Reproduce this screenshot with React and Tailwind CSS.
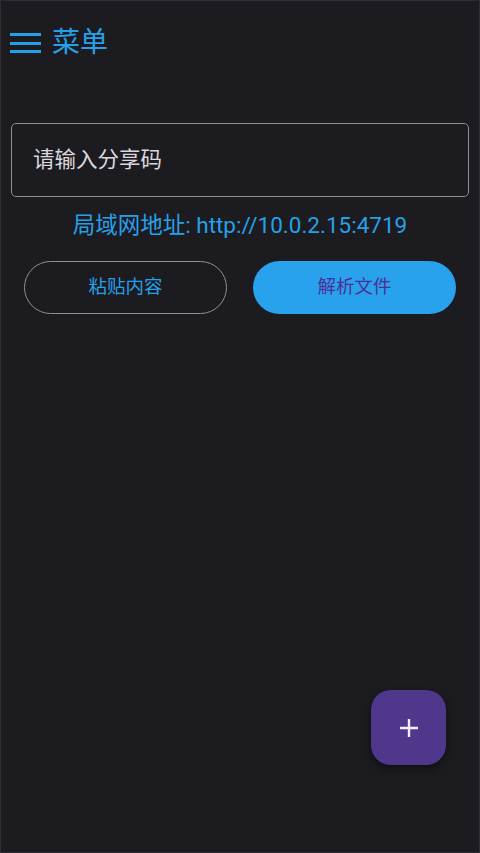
import React from "react";

export default function App() {
  return (
    <div
      className="relative w-[480px] h-[853px] overflow-hidden bg-[#1c1b20] border border-[#2e2d33] flex flex-col"
      style={{ fontFamily: 'Roboto, "Noto Sans CJK SC", sans-serif' }}
    >
      {/* Header */}
      <div className="flex items-center h-[40px] mt-[22px] pl-[9px]">
        <div className="flex flex-col gap-[5.5px] w-[31px]">
          <div className="h-[3px] bg-[#27a0ea]"></div>
          <div className="h-[3px] bg-[#27a0ea]"></div>
          <div className="h-[3px] bg-[#27a0ea]"></div>
        </div>
        <span className="ml-[11px] text-[28px] leading-none text-[#27a0ea]">菜单</span>
      </div>

      {/* Input */}
      <div className="mt-[60px] mx-[10px] h-[74px] rounded-[5px] border border-[#8f8f94] flex items-center pl-[21px]">
        <span className="text-[21.5px] text-[#d9d8de]">请输入分享码</span>
      </div>

      {/* LAN address */}
      <div className="mt-[15px] text-center text-[22.5px] leading-[27px] text-[#27a0ea]">
        局域网地址: http://10.0.2.15:4719
      </div>

      {/* Buttons */}
      <div className="mt-[22px] flex gap-[26px] px-[23px]">
        <button className="w-[203px] h-[53px] rounded-full border border-[#8f8f94] text-[18.5px] text-[#27a0ea] flex items-center justify-center">
          粘贴内容
        </button>
        <button className="w-[203px] h-[53px] rounded-full bg-[#28a2ec] text-[18.5px] text-[#4b2f96] flex items-center justify-center">
          解析文件
        </button>
      </div>

      {/* FAB */}
      <div className="absolute left-[370px] top-[689px] w-[75px] h-[75px] rounded-[20px] bg-[#4f378b] shadow-[0_4px_8px_rgba(0,0,0,0.45)] flex items-center justify-center">
        <svg width="22" height="22" viewBox="0 0 22 22">
          <path d="M11 2v18M2 11h18" stroke="#f4eefc" strokeWidth="2.4" />
        </svg>
      </div>
    </div>
  );
}
